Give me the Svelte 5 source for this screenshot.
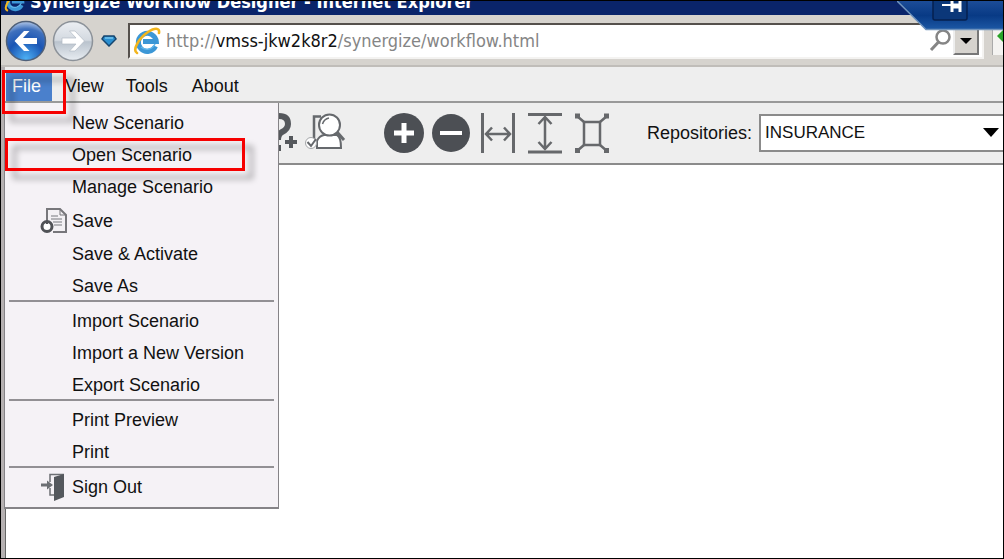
<script>
  const menus = ['File', 'View', 'Tools', 'About'];
  const groups = [
    [
      { label: 'New Scenario' },
      { label: 'Open Scenario', marked: true },
      { label: 'Manage Scenario' },
      { label: 'Save', icon: 'save' },
      { label: 'Save & Activate' },
      { label: 'Save As' }
    ],
    [{ label: 'Import Scenario' }, { label: 'Import a New Version' }, { label: 'Export Scenario' }],
    [{ label: 'Print Preview' }, { label: 'Print' }],
    [{ label: 'Sign Out', icon: 'exit' }]
  ];
</script>

{#snippet ie(size)}
  <svg width={size} height={size} viewBox="0 0 28 28" fill="none" aria-hidden="true">
    <path d="M22.500 19.200A9 9 0 1 1 23.300 14.600H10" stroke="#3c97d6" stroke-width="5" />
    <path d="M22 17A9 9 0 0 1 8 20" stroke="#62b6ea" stroke-width="1.500" />
    <path d="M4 26C-1 23 6 11 15 5C21 1 27 0 26 6" stroke="#f2b51d" stroke-width="2.600" stroke-linecap="round" />
  </svg>
{/snippet}

<div class="window">
  <header class="title">
    {@render ie(22)}
    <span>Synergize Workflow Designer - Internet Explorer</span>
  </header>

  <div class="pin-tab">
    <svg width="106" height="30" viewBox="0 0 106 30" aria-hidden="true">
      <defs>
        <linearGradient id="tab" x1="0" y1="0" x2="0" y2="1">
          <stop offset="0" stop-color="#1c4c97" />
          <stop offset=".5" stop-color="#083a85" />
          <stop offset="1" stop-color="#1d59a6" />
        </linearGradient>
      </defs>
      <path d="M0 0H106V29H29Z" fill="url(#tab)" />
      <path d="M0 0L29 28.500H106" fill="none" stroke="#6f93bd" stroke-width="1.500" />
      <path d="M36 0V17Q36 19 38 19H68Q70 19 70 17V0" fill="#0b3779" stroke="#06204f" stroke-width="1.500" />
      <path d="M45 4H54" stroke="#fff" stroke-width="2" />
      <path d="M55 0V11M63 0V11" stroke="#fff" stroke-width="3" />
      <path d="M55 5H63" stroke="#fff" stroke-width="5" />
    </svg>
  </div>

  <nav class="address-row">
    <button class="round" aria-label="Back">
      <svg width="42" height="42" viewBox="0 0 42 42">
        <defs>
          <radialGradient id="back" cx=".5" cy=".95" r=".95">
            <stop offset="0" stop-color="#4db0f4" />
            <stop offset=".5" stop-color="#1a55b4" />
            <stop offset=".8" stop-color="#3f70bd" />
            <stop offset="1" stop-color="#b4c9e9" />
          </radialGradient>
        </defs>
        <circle cx="21" cy="21" r="19.500" fill="url(#back)" stroke="#4f6079" stroke-width="1.500" />
        <path d="M19 11L9.500 21L19 31H24.500L18 24H32V18H18L24.500 11Z" fill="#fff" />
      </svg>
    </button>
    <button class="round" aria-label="Forward">
      <svg width="42" height="42" viewBox="0 0 42 42">
        <defs>
          <linearGradient id="forward" x1="0" y1="0" x2="0" y2="1">
            <stop offset="0" stop-color="#eceff3" />
            <stop offset=".48" stop-color="#d3d9e0" />
            <stop offset=".52" stop-color="#bac3cd" />
            <stop offset="1" stop-color="#e8edf2" />
          </linearGradient>
        </defs>
        <circle cx="21" cy="21" r="19.500" fill="url(#forward)" stroke="#8c9299" stroke-width="1.500" />
        <path d="M23 11L32.500 21L23 31H17.500L24 24H10V18H24L17.500 11Z" fill="#fff" stroke="#b2bac4" stroke-width=".7" />
      </svg>
    </button>
    <button class="history" aria-label="Recent pages">
      <svg width="16" height="12" viewBox="0 0 16 12">
        <path d="M3 1H13L15 4L8 11L1 4Z" fill="#2b8fd0" stroke="#17466f" stroke-width="1.500" />
        <path d="M4 3H12" stroke="#74c4ef" stroke-width="1.500" />
      </svg>
    </button>
    <div class="address">
      {@render ie(28)}
      <div class="url">http://<b>vmss-jkw2k8r2</b>/synergize/workflow.html</div>
      <button class="search" aria-label="Search">
        <svg width="24" height="26" viewBox="0 0 24 26" fill="none" stroke="#858585">
          <circle cx="14" cy="9" r="6.500" stroke-width="2.500" />
          <path d="M9.500 14L2 22" stroke-width="3" />
        </svg>
      </button>
      <button class="drop" aria-label="Show address list">
        <svg width="12" height="6" viewBox="0 0 12 6"><path d="M0 0H12L6 6Z" /></svg>
      </button>
    </div>
    <button class="go" aria-label="Go">
      <svg width="10" height="28" viewBox="0 0 10 28"><path d="M10 3L4 9L10 15Z" fill="#29a329" /></svg>
    </button>
  </nav>

  <div class="app">
    <div class="menubar">
      {#each menus as name, i}
        <button class:active={i === 0}>{name}</button>
      {/each}
      <div class="menu">
        {#each groups as group}
          <div class="group">
            {#each group as item}
              <button class:marked={item.marked} class:tall={item.icon === 'save'}>
                <span class="glyph">
                  {#if item.icon === 'save'}
                    <svg width="28" height="28" viewBox="0 0 28 28" fill="none">
                      <path d="M7 14V2H20L26 8V25H13" fill="#f3f1f4" stroke="#77777b" stroke-width="2" />
                      <path d="M20 2V8H26" stroke="#77777b" />
                      <path d="M11 9H18M11 12H22M13 15H22M14 18H22" stroke="#b5b5b9" stroke-width="2" />
                      <circle cx="7" cy="19.500" r="5" fill="#fff" stroke="#505256" stroke-width="3" />
                      <path d="M7 14V17" stroke="#505256" stroke-width="2" />
                    </svg>
                  {:else if item.icon === 'exit'}
                    <svg width="28" height="28" viewBox="0 0 28 28" fill="none">
                      <path d="M10 9V1.500H24M10 15V22H14" stroke="#6c6f73" stroke-width="1.500" />
                      <path d="M14 4L24 1V24L14 28Z" fill="#54585d" />
                      <path d="M1 12H9" stroke="#6c6f73" stroke-width="3" />
                      <path d="M7 7.500L13 12L7 16.500Z" fill="#6c6f73" />
                    </svg>
                  {/if}
                </span>
                {item.label}
              </button>
            {/each}
          </div>
        {/each}
      </div>
    </div>

    <div class="toolbar">
      <div class="tools">
        <button aria-label="Add condition">
          <svg width="34" height="42" viewBox="0 0 34 42" fill="none" stroke="#55585c">
            <path d="M5 11Q6 4 14 4Q23 4 23 12Q23 17 17 20Q13 22 13 28" stroke-width="6" />
            <path d="M10 36H16" stroke-width="6" />
            <path d="M20 30H32M26 24V36" stroke-width="4" />
          </svg>
        </button>
        <button aria-label="Validate scenario">
          <svg width="42" height="42" viewBox="0 0 42 42" fill="none" stroke="#66696d">
            <path d="M17 4.500H10V30" stroke-width="2.500" />
            <path d="M13 36V29Q15 24 20 23H33Q37 25 37 36Z" fill="#fff" stroke-width="2" />
            <circle cx="25.500" cy="13" r="10.500" fill="#fff" stroke-width="2" />
            <path d="M18.500 12Q20 7 25 6" stroke-width="1.500" />
            <path d="M33 20L40 28" stroke-width="3" />
            <circle cx="7" cy="31" r="5.500" fill="#fff" stroke="#a4a6a9" />
            <path d="M3.500 30L7 34L12 27" stroke-width="2" />
          </svg>
        </button>
        <button class="gap" aria-label="Zoom in">
          <svg width="42" height="42" viewBox="0 0 42 42">
            <circle cx="21" cy="21" r="20" fill="#4c4f54" />
            <path d="M11 21H31M21 11V31" stroke="#fff" stroke-width="5" />
          </svg>
        </button>
        <button aria-label="Zoom out">
          <svg width="42" height="42" viewBox="0 0 42 42">
            <circle cx="21" cy="21" r="19" fill="#4c4f54" />
            <path d="M10 21H32" stroke="#fff" stroke-width="4" />
          </svg>
        </button>
        <button aria-label="Fit width">
          <svg width="42" height="42" viewBox="0 0 42 42" fill="none" stroke="#66686b">
            <path d="M5.500 1V41M36.500 1V41" stroke-width="3" />
            <path d="M10 22H32M15 15.500L9 22L15 28.500M27 15.500L33 22L27 28.500" stroke-width="2.500" />
          </svg>
        </button>
        <button aria-label="Fit height">
          <svg width="42" height="42" viewBox="0 0 42 42" fill="none" stroke="#66686b">
            <path d="M4 2.500H38M4 40H38" stroke-width="3" />
            <path d="M21 6V36M14.500 12L21 5L27.500 12M14.500 30L21 37L27.500 30" stroke-width="2.500" />
          </svg>
        </button>
        <button aria-label="Fit to page">
          <svg width="42" height="42" viewBox="0 0 42 42" fill="none" stroke="#66686b">
            <path d="M13 10H29V33H13Z" stroke-width="2.500" />
            <path d="M13 10L6 4M29 10L36 4M13 33L6 39M29 33L36 39" stroke-width="2.500" />
            <path d="M4 1.500H9V6.500H4ZM33 1.500H38V6.500H33ZM4 36H9V41H4ZM33 36H38V41H33Z" fill="#66686b" stroke="none" />
          </svg>
        </button>
      </div>
      <label for="repo">Repositories:</label>
      <div class="select">
        <select id="repo"><option>INSURANCE</option></select>
        <svg width="16" height="9" viewBox="0 0 16 9"><path d="M0 0H16L8 9Z" /></svg>
      </div>
    </div>
    <main></main>
  </div>
</div>

<style>
  :global(body) { background: #fff; }
  * { box-sizing: border-box; }
  button {
    margin: 0;
    padding: 0;
    border: 0;
    background: none;
    color: inherit;
    font: inherit;
  }
  svg { display: block; flex: none; }
  .window {
    position: relative;
    display: flex;
    flex-direction: column;
    min-height: 100vh;
    border: 1px solid #000;
    overflow: hidden;
    color: #111;
    font: 18px/24px "Liberation Sans", Arial, sans-serif;
  }
  .title {
    display: flex;
    align-items: flex-end;
    gap: 4px;
    height: 14px;
    padding: 0 3px 3px;
    overflow: hidden;
    background: #0a246a;
    color: #fff;
    font: bold 18px/20px "DejaVu Sans Condensed", "DejaVu Sans", sans-serif;
    white-space: nowrap;
  }
  .pin-tab {
    position: absolute;
    top: 0;
    right: 0;
    z-index: 2;
  }
  .address-row {
    display: flex;
    align-items: center;
    height: 52px;
    padding: 2px 0 0 4px;
    background: #d6d3ce;
    border-bottom: 2px solid #c0bdb9;
  }
  .round { margin-right: 5px; }
  .history { margin: 0 11px 0 2px; }
  .address {
    display: flex;
    flex: 1;
    align-items: center;
    height: 36px;
    padding: 0 3px;
    background: #fff;
    border: 2px solid #f4f3f1;
    border-top-color: #55504c;
    border-left-color: #55504c;
  }
  .url {
    flex: 1;
    padding-left: 5px;
    color: #858585;
    font: 18px/24px "DejaVu Sans Condensed", "DejaVu Sans", sans-serif;
    white-space: nowrap;
  }
  .url b { color: #111; font-weight: normal; }
  .drop {
    display: grid;
    place-items: center;
    width: 26px;
    height: 28px;
    background: #d6d3ce;
    border: 2px solid #777;
    border-top-color: #eee;
    border-left-color: #eee;
  }
  .go {
    margin-left: 8px;
    background: #f4f3f1;
    border-left: 1px solid #aaa;
  }
  .app {
    display: flex;
    flex: 1;
    flex-direction: column;
    border-left: 4px solid #b5b0b1;
  }
  .menubar {
    position: relative;
    display: flex;
    align-items: flex-end;
    height: 36px;
    background: #eee;
    border-bottom: 2px solid #999;
  }
  .menubar > button {
    height: 30px;
    padding: 0 11px;
  }
  .menubar > button:last-of-type { padding-left: 13px; }
  .menubar > .active {
    position: relative;
    z-index: 3;
    margin: 0 2px 0 1px;
    padding-left: 6px;
    background: #4a80cc;
    color: #fff;
  }
  .active::after,
  .marked::after {
    content: "";
    position: absolute;
    border: 3px solid #f60000;
    filter: drop-shadow(8px 8px 3px rgb(0 0 0 / 35%));
    pointer-events: none;
  }
  .active::after { inset: -1px -14px -13px -4px; }
  .marked::after { inset: -3px 29px -2px -4px; }
  .menu {
    position: absolute;
    top: 100%;
    left: -1px;
    z-index: 1;
    width: 275px;
    margin-top: 2px;
    padding: 1px 0 6px;
    background: #f5f2f6;
    border: 1px solid #858387;
    border-top: 0;
    border-bottom-width: 2px;
  }
  .group {
    display: flex;
    flex-direction: column;
    gap: 4px;
    margin: 0 4px;
    padding-top: 5px;
    border-bottom: 2px solid #929094;
  }
  .group:last-child { border-bottom: 0; }
  .group button {
    display: flex;
    align-items: center;
    height: 28px;
    text-align: left;
    white-space: nowrap;
  }
  .group .tall { height: 31px; }
  .group .marked { position: relative; }
  .glyph {
    flex: none;
    width: 28px;
    margin: 0 4px 0 31px;
  }
  .toolbar {
    display: flex;
    align-items: center;
    height: 62px;
    background: #eee;
    border-bottom: 2px solid #8b8b8b;
  }
  .tools {
    display: flex;
    align-items: center;
    gap: 5px;
    padding-left: 260px;
    margin-right: 34px;
  }
  .tools .gap { margin-left: 32px; }
  .select {
    position: relative;
    flex: 1;
    margin-left: 7px;
  }
  .select select {
    display: block;
    width: 100%;
    height: 38px;
    padding: 0 4px;
    background: #fff;
    border: 2px solid #8b8b8b;
    border-right: 0;
    border-radius: 0;
    color: #111;
    font: 17px/24px "Liberation Sans", Arial, sans-serif;
    appearance: none;
  }
  .select svg {
    position: absolute;
    top: 14px;
    right: 4px;
    pointer-events: none;
  }
  main {
    flex: 1;
    background: #fff;
    border-left: 1px solid #666;
  }
</style>
